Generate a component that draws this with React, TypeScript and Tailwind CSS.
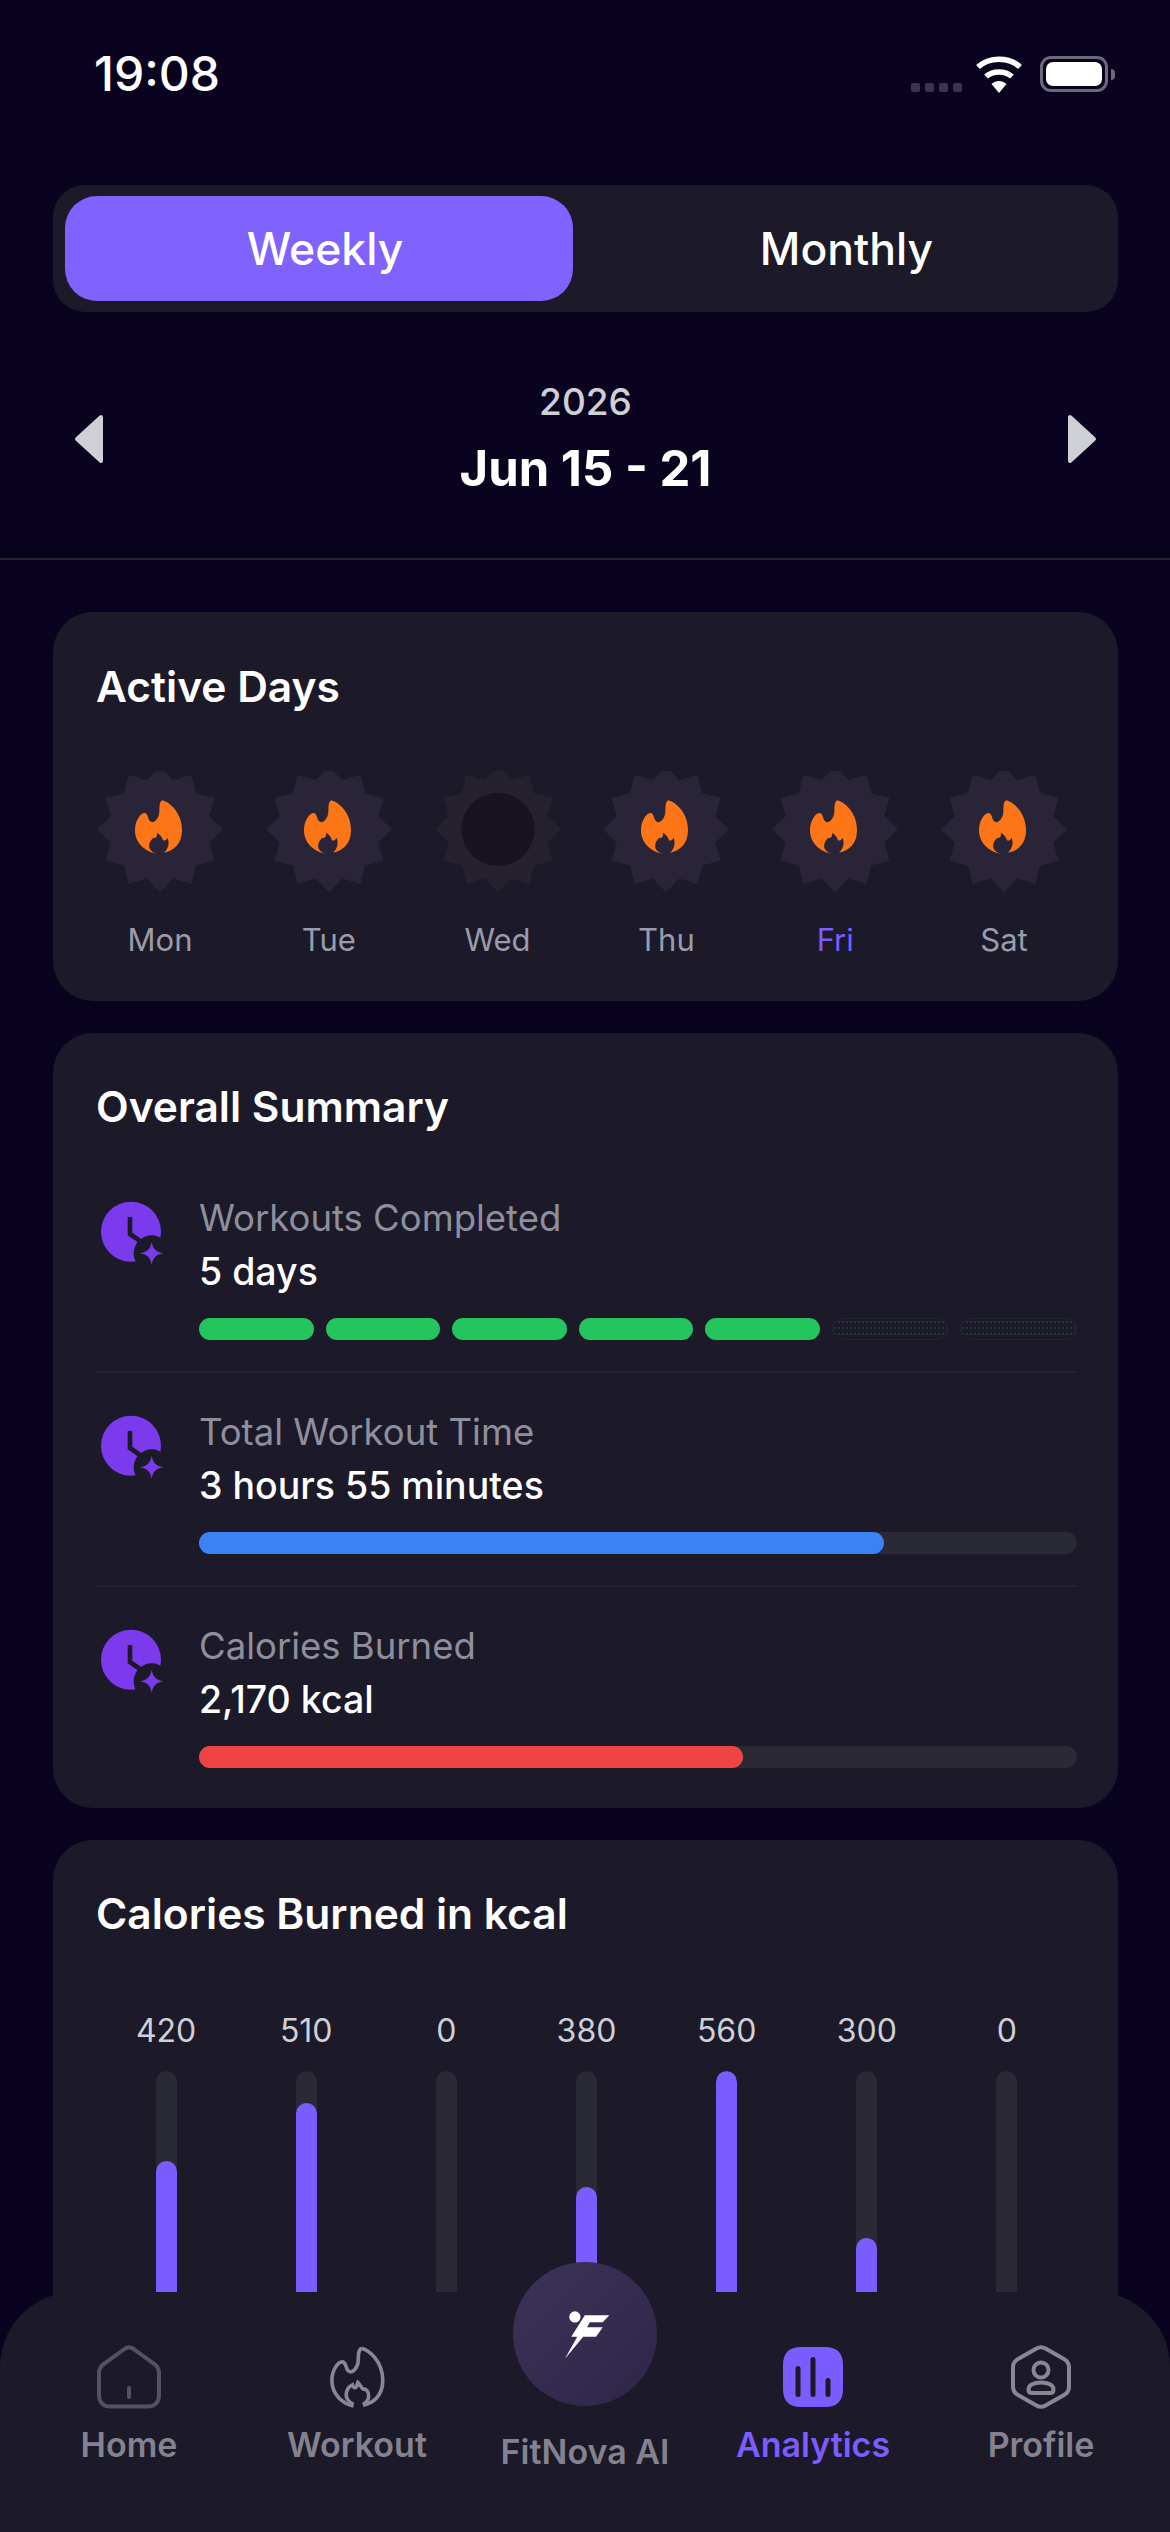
import React from 'react'

const DAYS = [
  { label: 'Mon', done: true },
  { label: 'Tue', done: true },
  { label: 'Wed', done: false },
  { label: 'Thu', done: true },
  { label: 'Fri', done: true, today: true },
  { label: 'Sat', done: true },
]

const CALORIES = [420, 510, 0, 380, 560, 300, 0]

const FLAME =
  'M250 150C270 155 309 185 309 240C309 280 285 302 255 307C268 295 272 280 266 262C262 270 256 272 252 270C250 260 240 250 234 247C236 258 230 265 224 262C212 270 208 285 212 295C216 302 225 308 235 311C200 305 168 280 168 240C168 210 185 188 197 188C207 188 206 205 213 213C225 222 240 205 241 185C242 170 240 155 250 150Z'

function starPoints() {
  const pts: string[] = []
  for (let i = 0; i < 24; i++) {
    const r = i % 2 === 0 ? 189 : 153
    const a = (i * 15 * Math.PI) / 180
    pts.push(`${(243 + r * Math.sin(a)).toFixed(1)},${(237 - r * Math.cos(a)).toFixed(1)}`)
  }
  return pts.join(' ')
}

function Badge({ done }: { done: boolean }) {
  return (
    <svg viewBox="54 62 378 372" className="h-[124px] w-[126px]">
      <polygon points={starPoints()} fill={done ? '#2a2439' : '#25222d'} />
      {done ? <path d={FLAME} fill="#fc7617" /> : <circle cx="243" cy="237" r="110" fill="#18131f" />}
    </svg>
  )
}

function ClockIcon() {
  return (
    <svg viewBox="120 120 195 195" className="h-[65px] w-[65px]">
      <circle cx="213" cy="215" r="90" fill="#7c3aed" />
      <path d="M210 171V222L240 243" stroke="#1c1929" strokeWidth="14" fill="none" />
      <circle cx="275" cy="280" r="54" fill="#1c1929" />
      <path d="M275 245C279 267 288 276 311 280C288 284 279 293 275 315C271 293 262 284 240 280C262 276 271 267 275 245Z" fill="#7c3aed" />
    </svg>
  )
}

function SummaryRow({ label, value, children, last }: { label: string; value: string; children: React.ReactNode; last?: boolean }) {
  return (
    <div className={`flex pt-[33px] ${last ? '' : 'border-b-2 border-[#25222f] pb-[31px]'}`}>
      <div className="w-[103px] shrink-0 pl-[4px] pt-[8px]">
        <ClockIcon />
      </div>
      <div className="flex-1">
        <div className="text-[36.500px] leading-[53px] text-[#8e8f9e]">{label}</div>
        <div className="text-[37.500px] leading-[53px] font-medium text-white">{value}</div>
        <div className="mt-[20px]">{children}</div>
      </div>
    </div>
  )
}

function Progress({ percent, color }: { percent: number; color: string }) {
  return (
    <div className="h-[22px] rounded-full bg-[#292a33]">
      <div className={`h-full rounded-full ${color}`} style={{ width: `${percent}%` }} />
    </div>
  )
}

function Logo() {
  return (
    <svg viewBox="240 200 160 160" className="h-[53px] w-[53px]">
      <circle cx="288" cy="227" r="17" fill="#fff" />
      <polygon points="318,222 392,222 372,243 333,243 325,258 372,258 352,287 313,287 258,353 295,287 277,287" fill="#fff" />
    </svg>
  )
}

function HomeIcon() {
  return (
    <svg viewBox="0 0 64 64" className="h-[64px] w-[64px]" fill="none" stroke="#55525f" strokeWidth="4" strokeLinecap="round">
      <path d="M26 5C30 1.500 34 1.500 38 5L56 18C60.500 21 62 24 62 28V50C62 57 58 61.500 51 61.500H13C6 61.500 2 57 2 50V28C2 24 3.500 21 8 18Z" />
      <path d="M32 43V52" />
    </svg>
  )
}

function WorkoutIcon() {
  return (
    <svg viewBox="160 142 158 176" className="h-[64px] w-[57px]">
      <path d="M250 150C270 155 309 185 309 240C309 280 285 302 254 308M228 310C200 305 168 280 168 240C168 210 185 188 197 188C207 188 206 205 213 213C225 222 240 205 241 185C242 170 240 155 250 150" fill="none" stroke="#8a8794" strokeWidth="10" />
      <path d="M228 306C212 298 206 286 208 274C210 264 216 256 225 252C226 258 232 262 235 258C238 254 238 250 240 245C246 250 250 262 256 264C262 262 270 270 270 282C270 294 262 302 254 306" fill="none" stroke="#8a8794" strokeWidth="10" />
    </svg>
  )
}

function AnalyticsIcon() {
  return (
    <svg viewBox="0 0 60 60" className="h-[60px] w-[60px]">
      <path d="M18 0H42C54 0 60 6 60 18V42C60 54 54 60 42 60H18C6 60 0 54 0 42V18C0 6 6 0 18 0Z" fill="#7b5cff" />
      <rect x="12.500" y="19" width="5" height="31" rx="2.500" fill="#1c1929" />
      <rect x="27.500" y="10" width="5" height="40" rx="2.500" fill="#1c1929" />
      <rect x="42.500" y="31" width="5" height="19" rx="2.500" fill="#1c1929" />
    </svg>
  )
}

function ProfileIcon() {
  return (
    <svg viewBox="0 0 60 64" className="h-[64px] w-[60px]" fill="none" stroke="#8a8794" strokeWidth="4">
      <path d="M25.500 3.500C28.500 1.800 31.500 1.800 34.500 3.500L53 14C56.500 16 58 18.500 58 22V42C58 45.500 56.500 48 53 50L34.500 60.500C31.500 62.200 28.500 62.200 25.500 60.500L7 50C3.500 48 2 45.500 2 42V22C2 18.500 3.500 16 7 14Z" />
      <circle cx="30" cy="25" r="7.500" />
      <path d="M21 48C18.500 48 17.500 46.500 17.500 44.500C17.500 40 23 37.500 30 37.500C37 37.500 42.500 40 42.500 44.500C42.500 46.500 41.500 48 39 48Z" />
    </svg>
  )
}

function NavItem({ icon, label, active }: { icon: React.ReactNode; label: string; active?: boolean }) {
  return (
    <div className="flex w-[228px] flex-col items-center">
      <div className="flex h-[66px] items-center justify-center">{icon}</div>
      <div className={`mt-[15px] text-[34px] leading-[40px] font-semibold ${active ? 'text-[#7b5cff]' : 'text-[#85828f]'}`}>{label}</div>
    </div>
  )
}

export default function App() {
  return (
    <div className="relative h-[2532px] w-[1170px] overflow-hidden bg-[#0a0320] font-['Inter',sans-serif] text-white">
      {/* status bar */}
      <div className="flex h-[148px] items-center justify-between pl-[94px] pr-[62px]">
        <div className="text-[48px] leading-[56px] font-medium">19:08</div>
        <div className="flex items-center">
          <div className="mr-[13px] mt-[27px] flex gap-[5px]">
            {[0, 1, 2, 3].map((i) => (
              <div key={i} className="h-[9px] w-[9px] rounded-[2px] bg-[#3a3353]" />
            ))}
          </div>
          <svg viewBox="0 0 48 37" className="h-[37px] w-[48px]">
            <path d="M3 11C14 0.500 34 0.500 45 11" fill="none" stroke="#fff" strokeWidth="5.500" />
            <path d="M11 20.500C18 14.500 30 14.500 37 20.500" fill="none" stroke="#fff" strokeWidth="5.500" />
            <path d="M16.500 28C21 24 27 24 31.500 28L24 37Z" fill="#fff" />
          </svg>
          <div className="relative ml-[17px] flex h-[36px] w-[68px] items-center justify-center rounded-[11px] border-[3px] border-[#6d6978]">
            <div className="h-[24px] w-[56px] rounded-[7px] bg-white" />
            <div className="absolute right-[-10px] h-[11px] w-[4px] rounded-r-full bg-[#6d6978]" />
          </div>
        </div>
      </div>

      {/* weekly / monthly */}
      <div className="ml-[53px] mr-[52px] mt-[37px] flex h-[127px] rounded-[32px] bg-[#1c1929] px-[12px] py-[11px] text-[44.500px] font-medium">
        <div className="flex w-[508px] items-center justify-center rounded-[32px] bg-[#8062ff] pl-[12px] pt-[2px]">Weekly</div>
        <div className="flex flex-1 items-center justify-center pl-[14px] pt-[2px]">Monthly</div>
      </div>

      {/* date range */}
      <div className="flex h-[248px] items-start justify-between border-b-2 border-[#25222f] pl-[74px] pr-[73px] pt-[68px]">
        <svg viewBox="0 0 30 50" className="mt-[34px] h-[50px] w-[30px]">
          <path d="M27 3V47L3 25Z" fill="#cfcfd6" stroke="#cfcfd6" strokeWidth="4" strokeLinejoin="round" />
        </svg>
        <div className="flex flex-col items-center">
          <div className="text-[37px] leading-[44px] font-medium text-[#cfcfd6]">2026</div>
          <div className="mt-[17px] text-[49px] leading-[56px] font-bold">Jun 15 - 21</div>
        </div>
        <svg viewBox="0 0 30 50" className="mt-[34px] h-[50px] w-[30px]">
          <path d="M3 3V47L27 25Z" fill="#cfcfd6" stroke="#cfcfd6" strokeWidth="4" strokeLinejoin="round" />
        </svg>
      </div>

      {/* active days */}
      <div className="ml-[53px] mr-[52px] mt-[52px] h-[389px] rounded-[40px] bg-[#1c1929] pl-[44px] pr-[41px] pt-[49px]">
        <div className="ml-[-1px] text-[42.500px] leading-[52px] font-semibold">Active Days</div>
        <div className="mt-[58px] flex gap-[42.800px]">
          {DAYS.map((d) => (
            <div key={d.label} className="flex w-[126px] flex-col items-center">
              <Badge done={d.done} />
              <div className={`mt-[26px] text-[31px] leading-[38px] ${d.today ? 'text-[#7b5cff]' : 'text-[#9a9cab]'}`}>{d.label}</div>
            </div>
          ))}
        </div>
      </div>

      {/* overall summary */}
      <div className="ml-[53px] mr-[52px] mt-[32px] h-[775px] rounded-[40px] bg-[#1c1929] pl-[43px] pr-[41px] pt-[48px]">
        <div className="text-[42.500px] leading-[52px] font-semibold">Overall Summary</div>
        <div className="mt-[26px]">
          <SummaryRow label="Workouts Completed" value="5 days">
            <div className="flex gap-[12px]">
              {[0, 1, 2, 3, 4, 5, 6].map((i) =>
                i < 5 ? (
                  <div key={i} className="h-[22px] flex-1 rounded-full bg-[#22c55e]" />
                ) : (
                  <div
                    key={i}
                    className="h-[22px] flex-1 rounded-full border border-[#272431] bg-[radial-gradient(#1a5f3d_0.5px,transparent_0.7px)] bg-[size:4px_6px]"
                  />
                ),
              )}
            </div>
          </SummaryRow>
          <SummaryRow label="Total Workout Time" value="3 hours 55 minutes">
            <Progress percent={78} color="bg-[#3b82f6]" />
          </SummaryRow>
          <SummaryRow label="Calories Burned" value="2,170 kcal" last>
            <Progress percent={62} color="bg-[#ef4444]" />
          </SummaryRow>
        </div>
      </div>

      {/* calories chart */}
      <div className="ml-[53px] mr-[52px] mt-[32px] h-[700px] rounded-[40px] bg-[#1c1929] pl-[43px] pr-[41px] pt-[48px]">
        <div className="text-[42.500px] leading-[52px] font-semibold">Calories Burned in kcal</div>
        <div className="mt-[72px] grid grid-cols-7">
          {CALORIES.map((v, i) => (
            <div key={i} className="flex flex-col items-center">
              <div className="text-[32px] leading-[38px] text-[#cfcfd6]">{v}</div>
              <div className="mt-[21px] flex h-[360px] w-[21px] items-end overflow-hidden rounded-full bg-[#292a33]">
                <div className="w-full rounded-t-full bg-[#7b5cff]" style={{ height: `${(v / 560) * 100}%` }} />
              </div>
            </div>
          ))}
        </div>
      </div>

      {/* bottom nav */}
      <div className="absolute bottom-0 left-0 right-0 h-[240px] rounded-t-[75px] bg-[#1c1929]">
        <div className="flex px-[15px] pt-[52px]">
          <NavItem icon={<HomeIcon />} label="Home" />
          <NavItem icon={<WorkoutIcon />} label="Workout" />
          <div className="relative w-[228px]">
            <div className="absolute left-[42px] top-[-82px] flex h-[144px] w-[144px] items-center justify-center rounded-full bg-gradient-to-br from-[#3c3458] via-[#352c50] to-[#2e2649]">
              <Logo />
            </div>
            <div className="absolute inset-x-0 top-[88px] text-center text-[34px] leading-[40px] font-semibold text-[#85828f]">FitNova AI</div>
          </div>
          <NavItem icon={<AnalyticsIcon />} label="Analytics" active />
          <NavItem icon={<ProfileIcon />} label="Profile" />
        </div>
      </div>
    </div>
  )
}
